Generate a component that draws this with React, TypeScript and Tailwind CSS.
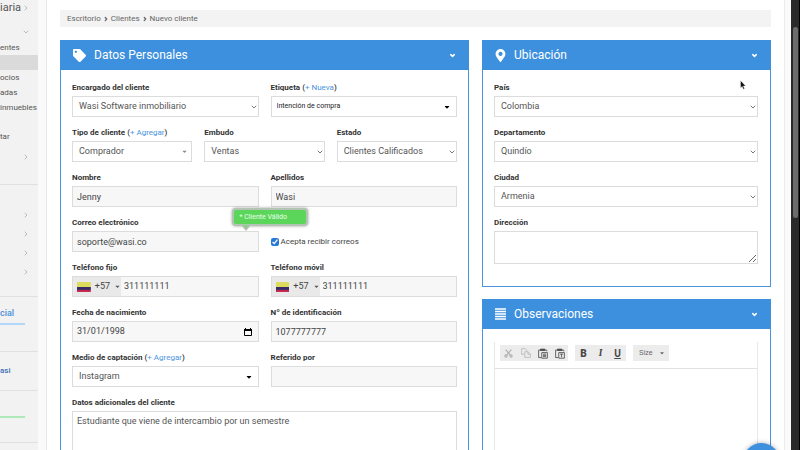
import React from 'react';
import { ChevronDown, ChevronRight } from 'lucide-react';
import { FaTag, FaMapMarkerAlt, FaCaretDown } from 'react-icons/fa';
import clsx from 'clsx';

interface FieldProps {
  id: string;
  label: string;
  action?: string;
  className?: string;
  children: React.ReactNode;
}

function Field({ id, label, action, className, children }: FieldProps) {
  return (
    <div className={clsx('min-w-0', className)}>
      <div className="h-[17px] text-[8px] leading-[18px] font-bold text-[#333] whitespace-nowrap">
        <label htmlFor={id}>{label}</label>
        {action && (
          <span className="font-medium">
            {' '}(<a href="#" className="font-normal text-[#4a94dd]">+ {action}</a>)
          </span>
        )}
      </div>
      {children}
    </div>
  );
}

interface SelectProps {
  id: string;
  value: string;
  caret?: 'chevron' | 'light' | 'dark';
  small?: boolean;
}

function Select({ id, value, caret = 'chevron', small }: SelectProps) {
  return (
    <div className="relative">
      <select
        id={id}
        defaultValue={value}
        className={clsx(
          'block h-[21px] w-full appearance-none border border-[#dcdcdc] bg-white',
          small ? 'pl-[5px] text-[7px] text-[#222]' : 'pl-1.5 text-[9px] text-[#555]'
        )}
      >
        <option>{value}</option>
      </select>
      <span className="pointer-events-none absolute inset-y-0 right-0 flex items-center">
        {caret === 'chevron' && <ChevronDown size={8} strokeWidth={3} className="mr-px text-[#777]" />}
        {caret === 'light' && <FaCaretDown size={7} className="mr-1 text-[#888]" />}
        {caret === 'dark' && <FaCaretDown size={8} className="mr-1.5 text-black" />}
      </span>
    </div>
  );
}

function Input({ id, value }: { id: string; value: string }) {
  return (
    <input
      id={id}
      type="text"
      defaultValue={value}
      className="block h-[21px] w-full border border-[#dcdcdc] bg-[#f7f7f7] px-1 text-[9px] text-[#444]"
    />
  );
}

function PhoneInput({ id, value }: { id: string; value: string }) {
  return (
    <div className="flex h-[21px] border border-[#dcdcdc] bg-[#f7f7f7]">
      <button type="button" className="flex w-12 shrink-0 items-center bg-[#e9e9e9] pl-1 text-[9px] text-[#444]">
        <svg width="14" height="10" viewBox="0 0 14 10">
          <rect width="14" height="5" fill="#dcdc5c" />
          <rect y="5" width="14" height="3" fill="#3a2a66" />
          <rect y="8" width="14" height="2" fill="#c2244c" />
        </svg>
        <span className="ml-1">+57</span>
        <FaCaretDown size={7} className="ml-1 text-[#555]" />
      </button>
      <input id={id} type="tel" defaultValue={value} className="w-full min-w-0 px-[3px] text-[9px] text-[#444]" />
    </div>
  );
}

interface PanelProps {
  title: string;
  icon: React.ReactNode;
  className?: string;
  children: React.ReactNode;
}

function Panel({ title, icon, className, children }: PanelProps) {
  return (
    <section className={clsx('border border-[#4a94dc] bg-white', className)}>
      <header className="-mx-px -mt-px flex h-[30px] items-center gap-2 bg-[#3d90dd] px-[13px] text-white">
        {icon}
        <h2 className="flex-1 text-[12px] leading-4 font-normal">{title}</h2>
        <button type="button" aria-label={`Contraer ${title}`}>
          <ChevronDown size={7} strokeWidth={5} />
        </button>
      </header>
      {children}
    </section>
  );
}

function SideText({ children, className }: { children?: React.ReactNode; className?: string }) {
  return (
    <a href="#" className={clsx('flex h-[15px] items-center text-[8px] text-[#555]', className)}>
      {children}
    </a>
  );
}

function SideArrow({ className }: { className?: string }) {
  return (
    <button type="button" aria-label="Abrir" className={clsx('flex w-full items-center justify-end pr-2', className)}>
      <ChevronRight size={8} strokeWidth={3} className="text-[#bbb]" />
    </button>
  );
}

function Sidebar() {
  return (
    <nav className="w-[38px] shrink-0 overflow-hidden bg-[#f2f2f2]">
      <div className="h-[184px]">
        <div className="flex h-4 items-center justify-between pr-2 text-[11px] text-[#555]">
          <span>iaria</span>
          <ChevronRight size={8} strokeWidth={3} className="-ml-1 shrink-0 text-[#bbb]" />
        </div>
        <div className="mt-[7px] flex h-[17px] items-center justify-end pr-2">
          <ChevronDown size={8} strokeWidth={3} className="text-[#bbb]" />
        </div>
        <SideText>entes</SideText>
        <div className="h-[15px] bg-[#dadada]" />
        <SideText>ocios</SideText>
        <SideText>adas</SideText>
        <SideText>inmuebles</SideText>
        <SideText className="mt-[14px]">tar</SideText>
        <SideArrow className="h-[26px]" />
      </div>
      <div className="h-28 border-t border-[#e0e0e0] pt-5">
        <SideArrow className="h-[19px]" />
        <SideArrow className="h-[19px]" />
        <SideArrow className="h-[19px]" />
        <SideArrow className="h-[19px]" />
      </div>
      <div className="h-[55px] border-t border-[#e0e0e0] pt-2">
        <a href="#" className="flex h-[18px] items-center text-[9px] font-medium text-[#4a90d9]">cial</a>
        <div className="h-0.5 w-[25px] bg-[#b3d7f8]" />
      </div>
      <div className="flex h-[39px] items-center border-t border-[#e0e0e0]">
        <a href="#" className="text-[8px] font-medium text-[#3a6fb5]">asi</a>
      </div>
      <div className="h-[52px] border-t border-[#e0e0e0] pt-[25px]">
        <div className="h-0.5 w-[25px] bg-[#aeeab8]" />
      </div>
      <div className="border-t border-[#e0e0e0]" />
    </nav>
  );
}

function LinesIcon() {
  return (
    <svg width="11" height="12" viewBox="0 0 11 12" fill="none" stroke="currentColor" strokeWidth="1.6">
      <path d="M0 1h11M0 3.500h11M0 6h11M0 8.500h11M0 11h11" />
    </svg>
  );
}

function CutIcon() {
  return (
    <svg width="9" height="9" viewBox="0 0 16 16" fill="none" stroke="currentColor" strokeWidth="2">
      <path d="M3 1l8 10M13 1L5 11" />
      <circle cx="3.5" cy="12.5" r="2" />
      <circle cx="12.5" cy="12.5" r="2" />
    </svg>
  );
}

function CopyIcon() {
  return (
    <svg width="10" height="10" viewBox="0 0 16 16" fill="none" stroke="currentColor" strokeWidth="1.3">
      <path d="M5 10H1V1h6l2 2v2" />
      <path d="M6 6h5l4 3.500V15H6z" />
      <path d="M11 6v4h4" />
    </svg>
  );
}

function PasteIcon({ plain }: { plain?: boolean }) {
  return (
    <svg width="10" height="11" viewBox="0 0 16 17" fill="none" stroke="currentColor" strokeWidth="1.3">
      <path d="M5 15H1V3h13v2" />
      <path d="M4 1.500h7v2H4z" fill="currentColor" />
      <path d="M6 7h9v9H6z" />
      {plain ? <path d="M8 9.500h5M10.500 9.500v5" /> : <path d="M8 9.500h5M8 11.500h5M8 13.500h5" />}
    </svg>
  );
}

function Editor() {
  const tool = 'flex h-4 w-[17px] items-center justify-center';
  return (
    <div className="mt-[13px] flex flex-1 flex-col border-x border-[#e8e8e8]">
      <div className="flex gap-[7px] border-b border-[#e2e2e2] pt-[3px] pb-[7px] pl-[5px] text-[#484848]">
        <div className="flex bg-[#ececec]">
          <button type="button" aria-label="Cortar" className={clsx(tool, 'text-[#b0b0b0]')}><CutIcon /></button>
          <button type="button" aria-label="Copiar" className={clsx(tool, 'text-[#b8b8b8]')}><CopyIcon /></button>
          <button type="button" aria-label="Pegar" className={tool}><PasteIcon /></button>
          <button type="button" aria-label="Pegar como texto" className={tool}><PasteIcon plain /></button>
        </div>
        <div className="flex bg-[#ececec] text-[10px]">
          <button type="button" className={clsx(tool, 'font-black')}>B</button>
          <button type="button" className={clsx(tool, 'font-serif font-bold italic')}>I</button>
          <button type="button" className={clsx(tool, 'font-bold underline')}>U</button>
        </div>
        <button type="button" className="flex h-4 w-9 items-center justify-between bg-[#ececec] pr-1 pl-1.5 font-['Liberation_Sans',sans-serif] text-[7px] text-[#666]">
          Size
          <FaCaretDown size={6} />
        </button>
      </div>
      <textarea aria-label="Observaciones" className="block w-full flex-1 resize-none" />
    </div>
  );
}

function PersonalData() {
  return (
    <Panel title="Datos Personales" icon={<FaTag size={13} />} className="min-h-[430px]">
      <form className="flex flex-col gap-[7px] px-[11px] pt-[9px]">
        <div className="grid grid-cols-2 gap-3">
          <Field id="encargado" label="Encargado del cliente">
            <Select id="encargado" value="Wasi Software inmobiliario" />
          </Field>
          <Field id="etiqueta" label="Etiqueta" action="Nueva">
            <Select id="etiqueta" value="Intención de compra" caret="dark" small />
          </Field>
        </div>
        <div className="grid grid-cols-3 gap-3">
          <Field id="tipo" label="Tipo de cliente" action="Agregar">
            <Select id="tipo" value="Comprador" caret="light" />
          </Field>
          <Field id="embudo" label="Embudo">
            <Select id="embudo" value="Ventas" />
          </Field>
          <Field id="estado" label="Estado">
            <Select id="estado" value="Clientes Calificados" />
          </Field>
        </div>
        <div className="grid grid-cols-2 gap-x-3 gap-y-[7px]">
          <Field id="nombre" label="Nombre"><Input id="nombre" value="Jenny" /></Field>
          <Field id="apellidos" label="Apellidos"><Input id="apellidos" value="Wasi" /></Field>
          <Field id="correo" label="Correo electrónico" className="relative">
            <Input id="correo" value="soporte@wasi.co" />
            <div
              role="status"
              className="absolute top-[-6px] right-[-49px] h-[18px] w-[76px] rounded-[4px] border-2 border-[#b4c4b4] bg-[#5bd65b] pl-1.5 text-[7px] leading-[15px] text-[#eaffea] shadow-[0_0_3px_#999]"
            >
              * Cliente Válido
              <svg width="10" height="7" viewBox="0 0 10 7" className="absolute top-[15px] left-[7px]">
                <path d="M0 0l5 6 5-6" fill="#b5bdb5" />
                <path d="M2 0l3 3.500L8 0z" fill="#7fd67f" />
              </svg>
            </div>
          </Field>
          <div className="flex items-end">
            <label className="flex h-[21px] items-center gap-0.5 text-[8px] whitespace-nowrap text-[#444]">
              <input type="checkbox" defaultChecked className="size-2 accent-[#2878d8]" />
              Acepta recibir correos
            </label>
          </div>
          <Field id="fijo" label="Teléfono fijo"><PhoneInput id="fijo" value="311111111" /></Field>
          <Field id="movil" label="Teléfono móvil"><PhoneInput id="movil" value="311111111" /></Field>
          <Field id="fecha" label="Fecha de nacimiento">
            <div className="flex h-[21px] items-center border border-[#dcdcdc] bg-[#f7f7f7] pr-1.5">
              <input id="fecha" type="text" defaultValue="31/01/1998" className="w-full min-w-0 px-1 text-[9px] text-[#444]" />
              <button type="button" aria-label="Abrir calendario">
                <svg width="8" height="8" viewBox="0 0 8 8" className="text-black">
                  <path d="M.500 1.500h7v6h-7z" fill="none" stroke="currentColor" />
                  <path d="M0 1h8v2H0zM1 0h1v1H1zM6 0h1v1H6z" fill="currentColor" />
                </svg>
              </button>
            </div>
          </Field>
          <Field id="identificacion" label="Nº de identificación"><Input id="identificacion" value="1077777777" /></Field>
          <Field id="medio" label="Medio de captación" action="Agregar">
            <Select id="medio" value="Instagram" caret="dark" />
          </Field>
          <Field id="referido" label="Referido por"><Input id="referido" value="" /></Field>
        </div>
        <Field id="adicionales" label="Datos adicionales del cliente">
          <textarea
            id="adicionales"
            defaultValue="Estudiante que viene de intercambio por un semestre"
            className="block h-16 w-full border border-[#dcdcdc] bg-white px-1 py-1 text-[9px] leading-[11px] text-[#555]"
          />
        </Field>
      </form>
    </Panel>
  );
}

export default function App() {
  return (
    <div className="relative flex h-screen overflow-hidden bg-white font-['Roboto',sans-serif]">
      <Sidebar />
      <div className="w-[9px] shrink-0 border-r border-[#e6e6e6] bg-[#fafafa]" />

      <main className="min-w-0 flex-1 px-[13px] pt-2.5">
        <nav className="flex h-[17px] items-center gap-0.5 bg-[#f3f3f3] pl-[7px] text-[8px] text-[#666]">
          <a href="#">Escritorio</a>
          <ChevronRight size={6} strokeWidth={5} />
          <a href="#">Clientes</a>
          <ChevronRight size={6} strokeWidth={5} />
          <span>Nuevo cliente</span>
        </nav>

        <div className="mt-[13px] grid grid-cols-[409fr_289fr] items-start gap-[13px]">
          <PersonalData />
          <div className="flex flex-col gap-3">
            <Panel title="Ubicación" icon={<FaMapMarkerAlt size={13} className="w-[11px]" />}>
              <form className="flex flex-col gap-[7px] pt-[9px] pr-3 pb-[22px] pl-[11px]">
                <Field id="pais" label="País"><Select id="pais" value="Colombia" /></Field>
                <Field id="departamento" label="Departamento"><Select id="departamento" value="Quindío" /></Field>
                <Field id="ciudad" label="Ciudad"><Select id="ciudad" value="Armenia" /></Field>
                <Field id="direccion" label="Dirección">
                  <textarea id="direccion" className="block h-[33px] w-full border border-[#dcdcdc] bg-white px-1 text-[9px]" />
                </Field>
              </form>
            </Panel>
            <Panel title="Observaciones" icon={<LinesIcon />} className="flex min-h-[200px] flex-col">
              <div className="flex flex-1 pr-3 pl-[11px]">
                <Editor />
              </div>
            </Panel>
          </div>
        </div>
      </main>

      <div className="w-[7px] shrink-0 border-l border-[#ececec] bg-[#fafafa]" />
      <div className="w-[9px] shrink-0 border-r border-black bg-[#2a2a2a] pt-[27px] pl-0.5">
        <div className="h-[191px] w-[5px] rounded-full bg-[#6c6c6c]" />
      </div>

      <button
        type="button"
        aria-label="Ayuda"
        className="absolute right-[20px] bottom-[-30px] size-[37px] rounded-full bg-[#3d90dd] shadow-[0_0_5px_rgba(0,0,0,0.3)]"
      />
      <svg width="6" height="10" viewBox="0 0 6 10" className="absolute top-[80px] right-[54px]">
        <path d="M.500.500v7.500l1.700-1.500 1.200 2.700 1.200-.500-1.200-2.700h2.300z" fill="#111" stroke="#fff" strokeWidth=".4" />
      </svg>
    </div>
  );
}
